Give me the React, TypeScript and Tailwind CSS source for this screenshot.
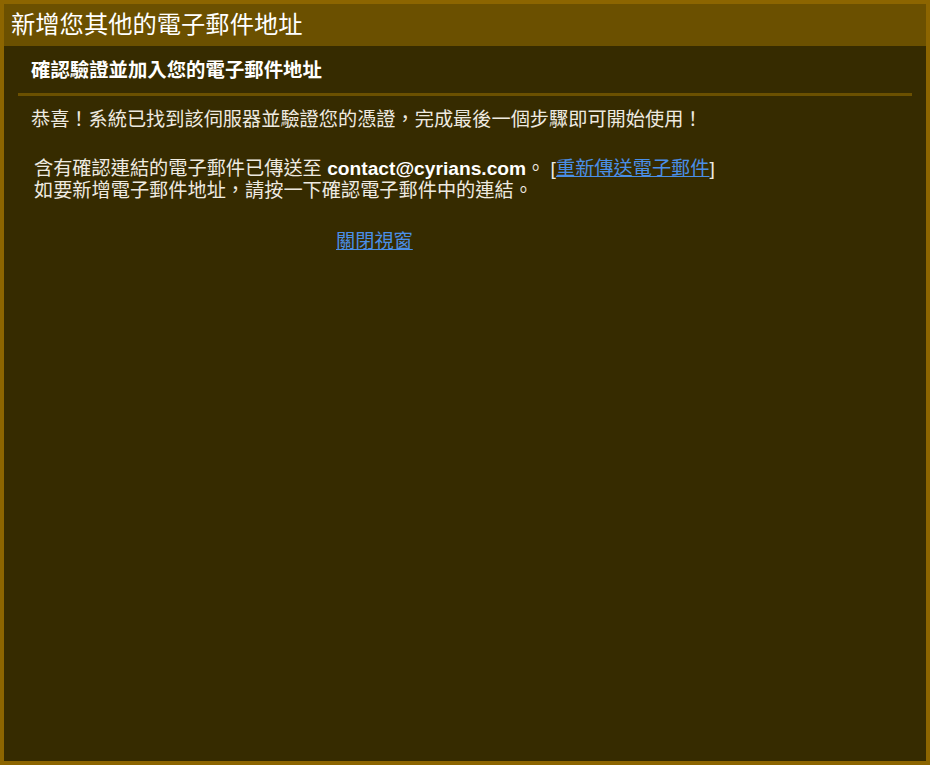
import React from "react";

const cjk = '"Liberation Sans", "Noto Sans CJK TC", sans-serif';

export default function App() {
  return (
    <div
      className="w-[930px] h-[765px] box-border border-4 border-[#8c6500] bg-[#362b00] text-[#eeeae0] overflow-hidden"
      style={{ fontFamily: cjk }}
    >
      <div className="h-[42px] bg-[#6b5000] flex items-center px-[7px]">
        <h1 className="text-[24.3px] leading-[24px] font-normal text-white">新增您其他的電子郵件地址</h1>
      </div>
      <div className="px-[14px]">
        <div className="h-[47px] flex items-center pl-[13px]">
          <h2 className="text-[19.4px] leading-[22px] font-bold text-white">確認驗證並加入您的電子郵件地址</h2>
        </div>
        <div className="h-[3px] bg-[#6b5000]" />
        <p className="mt-[12px] pl-[13px] text-[19.2px] leading-[24px]">
          恭喜！系統已找到該伺服器並驗證您的憑證，完成最後一個步驟即可開始使用！
        </p>
        <div className="mt-[26px] pl-[16px] w-fit">
          <p className="text-[19.2px] leading-[22px] whitespace-nowrap">
            含有確認連結的電子郵件已傳送至 <b className="font-bold text-white">contact@cyrians.com</b>。 [
            <a href="#" className="text-[#4a8fe7] underline">重新傳送電子郵件</a>]
            <br />
            如要新增電子郵件地址，請按一下確認電子郵件中的連結。
          </p>
          <div className="mt-[28px] text-center text-[19.2px] leading-[24px]">
            <a href="#" className="text-[#4a8fe7] underline">關閉視窗</a>
          </div>
        </div>
      </div>
    </div>
  );
}
